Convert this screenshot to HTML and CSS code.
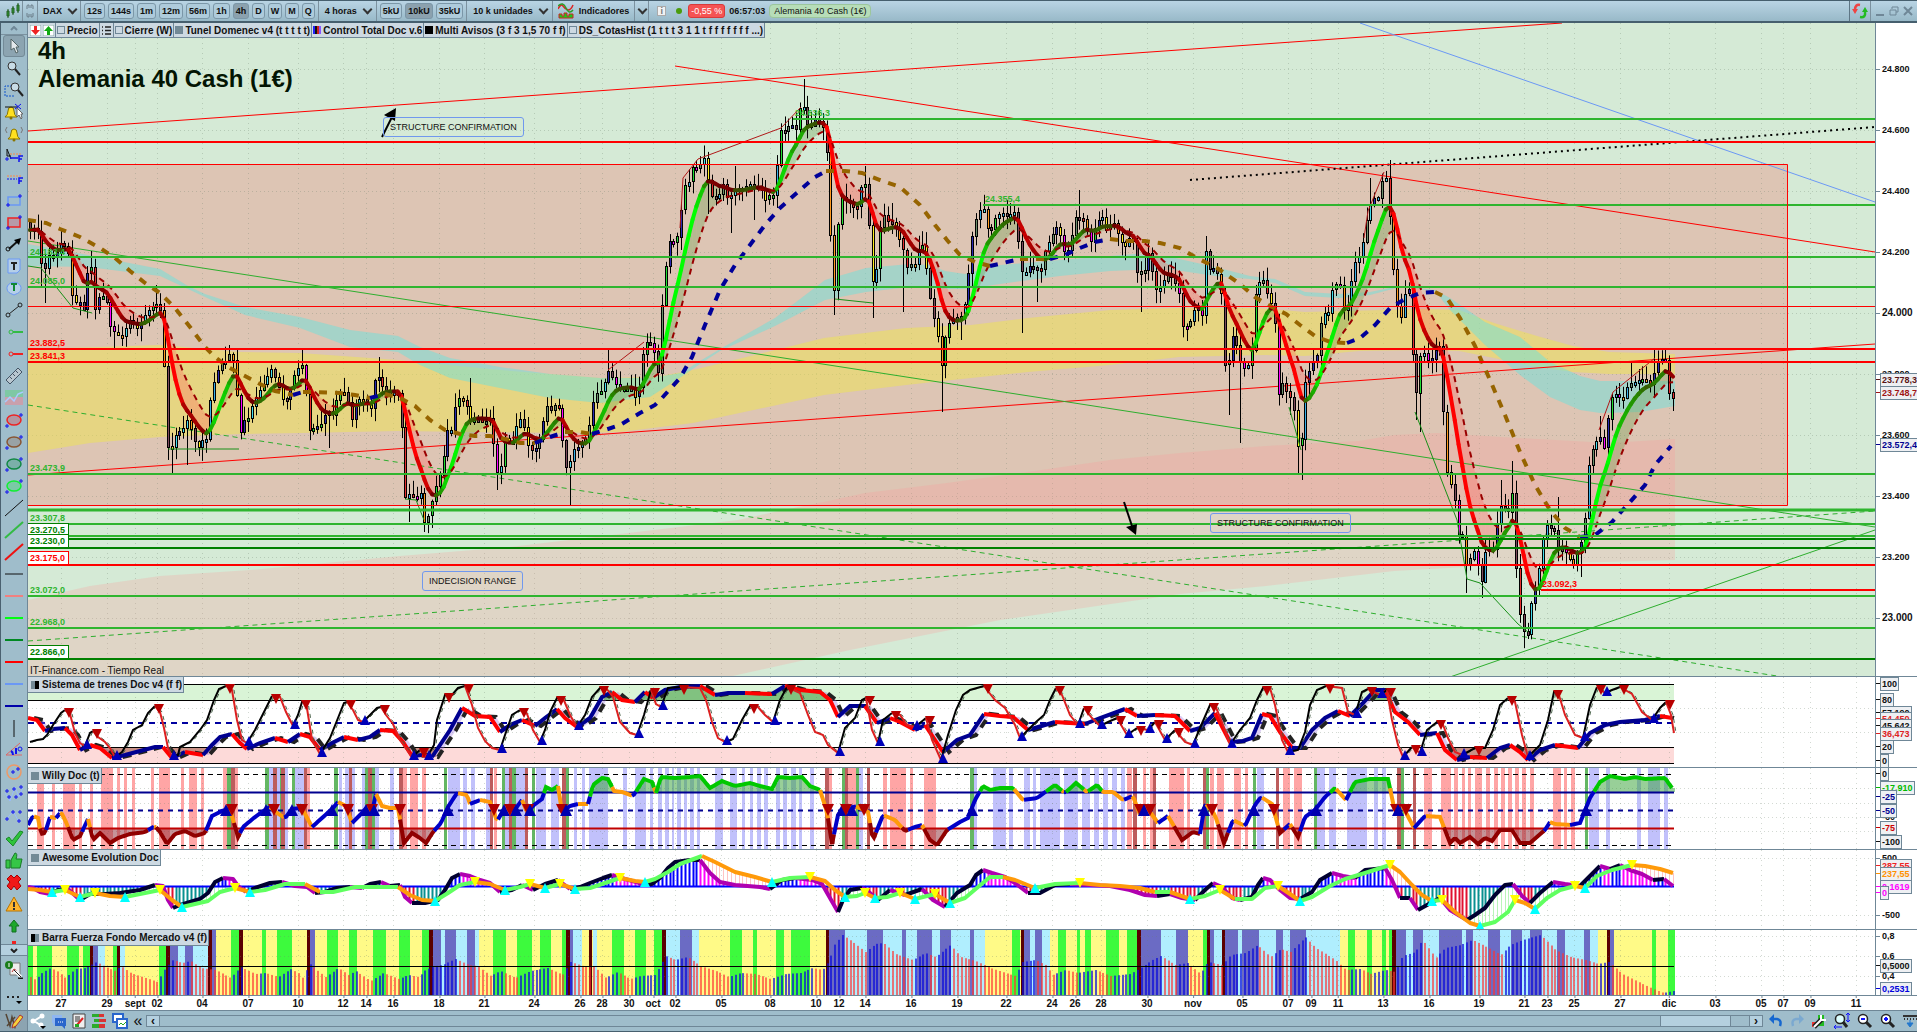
FILE: index.html
```html
<!DOCTYPE html>
<html lang="es">

<head>
    <meta charset="UTF-8">
    <meta name="viewport" content="width=device-width, initial-scale=1.0">
    <title>Alemania 40 Cash (1€)</title>
    <link rel="stylesheet" href="styles.css">
</head>

<body>
    <header class="toolbar">
        <div class="group">
            <svg class="icon" width="16" height="16" viewBox="0 0 16 16"><path d="M3 6v9M8 3v9M13 0v10" stroke="#245c24"/><path d="M2 8h2v5H2zM7 5h2v5H7zM12 2h2v6h-2z" fill="#2f9c2f" stroke="#245c24"/></svg>
        </div>
        <div class="group link">
            <svg class="icon" width="8" height="14" viewBox="0 0 8 14"><path d="M1 5V2q0-1 1-1h1v3M5 4V1h1q1 0 1 1v3M1 9v3q0 1 1 1h1v-3M5 10v3h1q1 0 1-1V9" fill="none" stroke="#6b7d88"/></svg>
        </div>
        <button class="drop symbol">DAX</button>
        <div class="group frames">
            <button>12s</button><button>144s</button><button>1m</button><button>12m</button><button>56m</button><button>1h</button><button class="on">4h</button><button>D</button><button>W</button><button>M</button><button>Q</button>
        </div>
        <button class="drop">4 horas</button>
        <div class="group frames units">
            <button>5kU</button><button class="on">10kU</button><button>35kU</button>
        </div>
        <button class="drop">10 k unidades</button>
        <button class="indicators">
            <svg width="16" height="16" viewBox="0 0 16 16"><path d="M0 6q3-6 5-3t5 4q3 0 5-5" fill="none" stroke="#d22" stroke-width="1.5"/><path d="M0 3q5-5 8 2t7 2" fill="none" stroke="#2a9d2a" stroke-width="1.5"/><path d="M1 15v-4h3v2h2v-3h3v3h2v-2h4v4z" fill="#1cc81c" stroke="#c22"/></svg>
            Indicadores
        </button>
        <button class="drop bare" aria-label="Más"></button>
        <div class="status">
            <span class="info">i</span>
            <span class="dot"></span>
            <span class="change">-0,55 %</span>
            <time>06:57:03</time>
            <span class="name">Alemania 40 Cash (1€)</span>
        </div>
        <div class="group swap">
            <svg width="16" height="16" viewBox="0 0 16 16"><path d="M8 2Q3 1 3 7" fill="none" stroke="#e44" stroke-width="2.5"/><path d="M0 6h6l-3 5z" fill="#e44"/><path d="M8 14q6 1 5-5" fill="none" stroke="#2b2" stroke-width="2.5"/><path d="M10 9h6l-3-5z" fill="#2b2"/></svg>
        </div>
        <div class="window-buttons">
            <button aria-label="Minimizar"><svg width="10" height="10" viewBox="0 0 10 10"><path d="M1 9h8" stroke="#6f8797" stroke-width="2"/></svg></button>
            <button aria-label="Restaurar"><svg width="10" height="10" viewBox="0 0 10 10"><path d="M3 3V1h6v5H7M1 4h6v5H1z" fill="none" stroke="#6f8797"/></svg></button>
            <button aria-label="Cerrar"><svg width="10" height="10" viewBox="0 0 10 10"><path d="M1 1l8 8M9 1L1 9" stroke="#6f8797" stroke-width="2"/></svg></button>
        </div>
    </header>

    <div class="workspace">
        <aside class="sidebar">
            <button class="scroll-up" aria-label="Subir"><svg width="8" height="5" viewBox="0 0 8 5"><path d="M1 4l3-3 3 3" fill="none" stroke="#6f8797" stroke-width="2"/></svg></button>
            <div class="tools" id="tools"></div>
            <button class="scroll-down" aria-label="Bajar"><svg width="8" height="5" viewBox="0 0 8 5"><path d="M1 1l3 3 3-3" fill="none" stroke="#222" stroke-width="2"/></svg></button>
            <div class="tools extra" id="extraTools"></div>
        </aside>

        <main class="charts">
            <section class="panel" id="price">
                <div class="plot">
                    <div class="legend">
                        <span class="arrows">
                            <svg width="11" height="11" viewBox="0 0 11 11"><path d="M0 0h11v11H0z" fill="#fff" stroke="#8aa"/><path d="M4 1h3v4h3l-4.5 5L1 5h3z" fill="#e22"/></svg>
                            <svg width="11" height="11" viewBox="0 0 11 11"><path d="M0 0h11v11H0z" fill="#fff" stroke="#8aa"/><path d="M4 10h3V6h3L5.5 1 1 6h3z" fill="#1a1"/></svg>
                        </span>
                        <span><i></i>Precio</span>
                        <span class="list"><svg width="9" height="9" viewBox="0 0 9 9"><path d="M0 1h1M3 1h6M0 4.5h1M3 4.5h6M0 8h1M3 8h6" stroke="#222" stroke-width="1.5"/></svg></span>
                        <span><i></i>Cierre (W)</span>
                        <span><i class="gray"></i>Tunel Domenec v4 (t t t t t)</span>
                        <span><i class="bars"></i>Control Total Doc v.6</span>
                        <span><i class="black"></i>Multi Avisos (3 f 3 1,5 70 f f)</span>
                        <span><i></i>DS_CotasHist (1 t t t 3 1 1 t f f f f f f f ...)</span>
                    </div>
                    <h1>4h<br>Alemania 40 Cash (1€)</h1>
                    <p class="source">IT-Finance.com - Tiempo Real</p>
                </div>
                <div class="axis"></div>
            </section>
            <section class="panel" id="trains">
                <div class="plot"><h2><i class="half"></i>Sistema de trenes Doc v4 (f f)</h2></div>
                <div class="axis"></div>
            </section>
            <section class="panel" id="willy">
                <div class="plot"><h2><i></i>Willy Doc (t)</h2></div>
                <div class="axis"></div>
            </section>
            <section class="panel" id="awesome">
                <div class="plot"><h2><i></i>Awesome Evolution Doc</h2></div>
                <div class="axis"></div>
            </section>
            <section class="panel" id="strength">
                <div class="plot"><h2><i class="half flip"></i>Barra Fuerza Fondo Mercado v4 (f)</h2></div>
                <div class="axis"></div>
            </section>
            <div class="dates" id="dates"></div>
        </main>
    </div>

    <footer class="bottombar">
        <button class="pencil" aria-label="Dibujo"><svg width="18" height="16" viewBox="0 0 18 16"><path d="M1 1l4 12 2-9 3 10 2-6M2 13L10 4" fill="none" stroke="#543" stroke-width="1.5"/><path d="M7 15l1-4 7-9 3 2-7 9z" fill="#f6d23a" stroke="#a33"/></svg></button>
        <div class="footer-icons">
            <button aria-label="Compartir"><svg width="16" height="16" viewBox="0 0 16 16"><path d="M12 3L4 8l8 5" fill="none" stroke="#fff" stroke-width="2"/><circle cx="3" cy="8" r="2.5" fill="#fff"/><circle cx="12" cy="3" r="2.5" fill="#fff"/><circle cx="11" cy="12" r="2.5" fill="#fff"/><path d="M10 13h6l-3 3z"/></svg></button>
            <button aria-label="Chat"><svg width="16" height="16" viewBox="0 0 16 16"><path d="M1 2h10v8H5l-3 3V10H1z" fill="#8fb6f0"/><path d="M4 5h11v8h-1v3l-3-3H4z" fill="#2a66cc"/><path d="M7 9h1M9 9h1M11 9h1" stroke="#fff"/></svg></button>
            <button aria-label="Informe"><svg width="14" height="16" viewBox="0 0 14 16"><path d="M1 1h12v14H1z" fill="#eee" stroke="#444"/><path d="M3 4h5M3 6h5M3 8h5" stroke="#333"/><path d="M5 12l6-7" stroke="#d22" stroke-width="2"/><path d="M3 11h4v3H3z" fill="#2a2"/></svg></button>
            <button aria-label="Libro"><svg width="16" height="16" viewBox="0 0 16 16"><path d="M1 1h7v3H1zM3 6h5v3H3zM1 11h7v4H1z" fill="#2cab2c"/><path d="M8 1h5v3H8zM8 6h7v3H8zM8 11h6v4H8z" fill="#d83434"/></svg></button>
            <button aria-label="Ventanas"><svg width="16" height="16" viewBox="0 0 16 16"><path d="M1 1h10v8H1z" fill="#fff" stroke="#2a66cc" stroke-width="2"/><path d="M5 6h10v9H5z" fill="#fff" stroke="#2a66cc" stroke-width="2"/><path d="M7 12l2-2 2 2 3-3" fill="none" stroke="#2a2"/></svg></button>
            <button class="collapse">«</button>
        </div>
        <div class="scrollbar">
            <button aria-label="Izquierda">‹</button>
            <div class="track"><div class="thumb"></div></div>
            <button aria-label="Derecha">›</button>
        </div>
        <div class="footer-tools">
            <button aria-label="Deshacer"><svg width="14" height="14" viewBox="0 0 14 14"><path d="M3 5h5q5 1 3 7" fill="none" stroke="#1667cf" stroke-width="2.5"/><path d="M0 5l5-5v10z" fill="#1667cf"/></svg></button>
            <button aria-label="Rehacer"><svg width="14" height="14" viewBox="0 0 14 14"><path d="M11 5H6q-5 1-3 7" fill="none" stroke="#7ba9d0" stroke-width="2.5"/><path d="M14 5L9 0v10z" fill="#7ba9d0"/></svg></button>
            <button aria-label="Ajustes"><svg width="16" height="16" viewBox="0 0 16 16"><path d="M1 9h4v5H1z" fill="#e33"/><path d="M7 2h6v11H7z" fill="#2b2"/><path d="M3 14l8-8" stroke="#222" stroke-width="5"/><path d="M3 14l8-8M10 2v5h5" fill="none" stroke="#fff" stroke-width="2"/></svg></button>
            <button aria-label="Ajustar zoom"><svg width="16" height="16" viewBox="0 0 16 16"><circle cx="6" cy="6" r="4.5" fill="#dff" stroke="#222" stroke-width="1.5"/><path d="M9 9l4 5" stroke="#222" stroke-width="3"/><path d="M14 0v9M12 2l2-2 2 2M12 7l2 2 2-2M0 14h8M2 12l-2 2 2 2" fill="none" stroke="#11f"/></svg></button>
            <button aria-label="Alejar"><svg width="16" height="16" viewBox="0 0 16 16"><circle cx="6" cy="6" r="4.5" fill="#fff" stroke="#222" stroke-width="1.5"/><path d="M9 9l5 5" stroke="#222" stroke-width="3"/><path d="M4 6h4" stroke="#11f" stroke-width="2"/></svg></button>
            <button aria-label="Acercar"><svg width="16" height="16" viewBox="0 0 16 16"><circle cx="6" cy="6" r="4.5" fill="#fff" stroke="#222" stroke-width="1.5"/><path d="M9 9l5 5" stroke="#222" stroke-width="3"/><path d="M4 6h4M6 4v4" stroke="#11f" stroke-width="2"/></svg></button>
            <button aria-label="Escala"><svg width="14" height="14" viewBox="0 0 14 14"><path d="M0 2h14M1 5h1M4 5h1M7 5h1M10 5h1M13 5h1" stroke="#333" stroke-width="2"/><path d="M7 6v4M4 9h6l-3 4z" stroke="#27c" fill="#27c"/></svg></button>
        </div>
    </footer>

    <script src="chart.js"></script>
</body>

</html>
```
FILE: styles.css
```css
* {
    box-sizing: border-box;
}

body {
    margin: 0;
    height: 100vh;
    display: flex;
    flex-direction: column;
    overflow: hidden;
    background-color: #9fbdcb;
    color: #111;
    font-family: "Liberation Sans", Arial, sans-serif;
    font-size: 10px;
    font-weight: bold;
}

button {
    font: inherit;
    color: inherit;
    background: none;
    border: none;
    margin: 0;
    padding: 0;
    display: flex;
    align-items: center;
    justify-content: center;
    cursor: pointer;
}

svg {
    display: block;
    flex: none;
}

/* top toolbar */
.toolbar {
    flex: none;
    height: 23px;
    display: flex;
    align-items: stretch;
    border-top: 1px solid #465f6e;
    border-bottom: 2px solid #465f6e;
    background: linear-gradient(#b9d4e4, #98b9c8);
    font-size: 9px;
    white-space: nowrap;
}

.group,
.drop,
.indicators {
    display: flex;
    align-items: center;
    border-right: 1px solid #7b919f;
    padding: 0 4px;
}

.group:first-child {
    padding: 0 1px 0 5px;
}

.group.link {
    padding: 0 3px;
}

.drop {
    padding: 0 4px 0 6px;
}

.drop.symbol {
    padding: 0 3px 0 5px;
}

.drop::after {
    content: "";
    width: 5px;
    height: 5px;
    margin: 0 1px 3px 7px;
    border-right: 2px solid #333;
    border-bottom: 2px solid #333;
    transform: rotate(45deg);
}

.drop.bare {
    width: 14px;
}

.drop.bare::after {
    flex: none;
    margin-left: 0;
}

.frames {
    gap: 3px;
    padding: 0 3px;
}

.frames button {
    height: 16px;
    padding: 0 2px;
    border: 1px solid #7b97a8;
    border-radius: 3px;
    background-color: #aecbdb;
}

.frames .on {
    background-color: #8ba1ae;
}

.indicators {
    gap: 5px;
    padding: 0 5px;
}

.status {
    flex: 1;
    display: flex;
    align-items: center;
    gap: 4px;
    padding-left: 8px;
}

.info {
    width: 9px;
    height: 10px;
    line-height: 8px;
    text-align: center;
    color: #777;
    background-color: #f2f2f2;
    border: 1px solid #aaa;
}

.dot {
    width: 6px;
    height: 6px;
    margin: 0 2px 0 6px;
    border-radius: 3px;
    background-color: #4a9c0c;
}

.change {
    padding: 0 2px;
    line-height: 12px;
    border: 1px solid #d83a3a;
    border-radius: 3px;
    background-color: #f55353;
    color: #fff;
    font-weight: normal;
}

.name {
    padding: 0 4px;
    line-height: 12px;
    border: 1px solid #9cc69c;
    border-radius: 4px;
    background-color: #b7ddb8;
    font-weight: normal;
}

.swap {
    border-left: 1px solid #5e7685;
    padding: 0 2px;
}

.window-buttons {
    display: flex;
    gap: 4px;
    padding: 0 4px;
}

/* drawing tools */
.workspace {
    flex: 1;
    min-height: 0;
    display: flex;
}

.sidebar {
    flex: none;
    width: 28px;
    display: flex;
    flex-direction: column;
    border-left: 1px solid #4a6170;
    border-right: 1px solid #6f8797;
    background-color: #9fbdcb;
}

.scroll-up {
    flex: none;
    height: 12px;
    border-bottom: 1px solid #7b919f;
}

.scroll-down {
    flex: none;
    height: 12px;
    border-top: 1px solid #6f8797;
    border-bottom: 1px solid #6f8797;
    background-color: #b4d0df;
}

.tools {
    flex: 1;
    min-height: 0;
    overflow: hidden;
}

.tools.extra {
    flex: none;
}

.tools button {
    width: 22px;
    height: 22px;
    margin-left: 2px;
    border: 1px solid transparent;
    border-radius: 3px;
}

.tools .on {
    background-color: #8ca4b1;
    border-color: #738a97;
}

.tools.extra button {
    height: 27px;
}

/* chart panels */
.charts {
    flex: 1;
    min-width: 0;
    display: grid;
    grid-template-rows: 654fr 91fr 82fr 80fr 66fr 14px;
    background-color: #fff;
}

.panel {
    min-height: 0;
    display: flex;
    border-bottom: 1px solid #6f8797;
}

.plot {
    position: relative;
    flex: 1;
    min-width: 0;
    overflow: hidden;
}

.plot > svg {
    width: 100%;
    height: 100%;
}

#price .plot {
    background-color: #d5ead6;
}

.axis {
    position: relative;
    flex: none;
    width: 42px;
    border-left: 1px solid #6f8797;
    overflow: hidden;
}

.axis span {
    position: absolute;
    left: 6px;
    margin-top: -5px;
    line-height: 10px;
    font-size: 9px;
}

.axis span::before {
    content: "";
    position: absolute;
    left: -6px;
    top: 5px;
    width: 4px;
    border-top: 1px solid #6f8797;
}

.axis .major {
    font-size: 10px;
}

.axis .tag {
    left: 4px;
    margin-top: -7px;
    padding: 1px;
    border: 1px solid #6f8797;
    background-color: #eef0f3;
}

.axis .tag::before {
    left: -5px;
    border-color: currentColor;
}

.legend {
    position: absolute;
    left: 0;
    top: 0;
    height: 15px;
    display: flex;
    background-color: #cdd9e2;
    border-bottom: 1px solid #6f8797;
    white-space: nowrap;
    line-height: 13px;
}

.legend span {
    display: flex;
    align-items: center;
    gap: 2px;
    padding: 0 1px;
    border-right: 1px solid #6f8797;
}

.legend .arrows {
    padding: 0 1px 0 2px;
}

.legend .list {
    padding: 0 2px;
}

.legend i,
h2 i {
    width: 8px;
    height: 8px;
    background-color: #738a96;
}

.legend i {
    background: none;
    border: 1px solid #6f8797;
}

.legend .gray {
    background-color: #738a96;
}

.legend .black {
    background-color: #000;
    border-color: #000;
}

.legend .bars {
    border: none;
    background: linear-gradient(90deg, #22f 25%, #111 25%, #111 50%, #c22 50%, #c22 75%, #85f 75%);
}

h1 {
    position: absolute;
    left: 10px;
    top: 14px;
    margin: 0;
    font-size: 24px;
    line-height: 28px;
    color: #031503;
}

h2 {
    position: absolute;
    left: 0;
    top: 0;
    margin: 0;
    padding: 0 1px 0 3px;
    display: flex;
    align-items: center;
    gap: 3px;
    font-size: 10px;
    line-height: 15px;
    border: solid #6f8797;
    border-width: 0 1px 1px 0;
    background-color: #cdd9e2;
}

h2 .half {
    background: linear-gradient(90deg, #738a96 50%, #000 50%);
}

h2 .flip {
    background: linear-gradient(90deg, #000 50%, #738a96 50%);
}

.source {
    position: absolute;
    left: 2px;
    bottom: 0;
    margin: 0;
    line-height: 11px;
    font-weight: normal;
}

.level {
    position: absolute;
    left: 2px;
    margin-top: -5px;
    line-height: 10px;
    font-size: 9px;
}

.level.boxed {
    left: 0;
    margin-top: -7px;
    padding: 1px 3px 1px 2px;
    border: 1px solid;
    border-left: none;
    background-color: #fff;
}

.note {
    position: absolute;
    padding: 0 6px;
    line-height: 18px;
    font-size: 9px;
    border: 1px solid #7098ee;
    border-radius: 3px;
    font-weight: normal;
    white-space: nowrap;
}

.dates {
    position: relative;
    margin-right: 42px;
}

.dates span {
    position: absolute;
    top: 2px;
    transform: translateX(-50%);
    line-height: 12px;
}

.dates span::before {
    content: "";
    position: absolute;
    left: 50%;
    top: -2px;
    height: 2px;
    border-left: 1px solid #6f8797;
}

/* bottom bar */
.bottombar {
    flex: none;
    height: 22px;
    display: flex;
    align-items: center;
    border-top: 1px solid #6f8797;
    border-bottom: 1px solid #465f6e;
    background-color: #9fbdcb;
}

.pencil {
    width: 28px;
    height: 20px;
    border-right: 1px solid #6f8797;
    background-color: #8ca4b1;
}

.footer-icons {
    display: flex;
    align-items: center;
    gap: 5px;
    padding-left: 2px;
}

.collapse {
    width: 10px;
    font-size: 16px;
    font-weight: normal;
    line-height: 14px;
}

.scrollbar {
    flex: 1;
    display: flex;
    height: 12px;
    margin-left: 3px;
    border: 1px solid #6f8797;
}

.scrollbar button {
    width: 12px;
    font-size: 12px;
    line-height: 8px;
    background-color: #b4d0df;
}

.track {
    flex: 1;
    display: flex;
    justify-content: flex-end;
    border: solid #6f8797;
    border-width: 0 1px;
}

.thumb {
    width: 71px;
    margin-right: 18px;
    border: solid #6f8797;
    border-width: 0 1px;
    background-color: #b4d0df;
}

.footer-tools {
    display: flex;
    align-items: center;
    gap: 7px;
    padding-left: 6px;
}
```
FILE: chart.js
```js
const LEFT = 28;
const RIGHT = 1875;
const LAST = 1674;
const STEP = 3.83;

const parse = text => text.trim().split(/\s+/).map(pair => pair.split(',').map(Number));

function valueAt(points, x) {
    if (x <= points[0][0]) return points[0][1];
    for (let i = 1; i < points.length; i++) {
        if (x <= points[i][0]) {
            const [x0, y0] = points[i - 1];
            const [x1, y1] = points[i];
            return y0 + (y1 - y0) * (x - x0) / (x1 - x0);
        }
    }
    return points[points.length - 1][1];
}

// small repeatable random generator, so the wicks do not jump on reload
let seed = 20;
function random() {
    seed = (seed * 16807) % 2147483647;
    return seed / 2147483647;
}

const xs = [];
for (let x = 30; x <= LAST + 1; x += STEP) xs.push(x);

const line = (x1, y1, x2, y2, color, width = 1, extra = '') =>
    `<line x1="${x1}" y1="${y1}" x2="${x2}" y2="${y2}" stroke="${color}" stroke-width="${width}" ${extra}/>`;
const rect = (x, y, w, h, fill) => `<rect x="${x}" y="${y}" width="${w}" height="${h}" fill="${fill}"/>`;
const poly = (points, color, width, extra = '') =>
    `<polyline points="${points.map(p => p.join()).join(' ')}" fill="none" stroke="${color}" stroke-width="${width}" ${extra}/>`;
const up = (x, y, color, s = 5) => `<path d="M${x - s} ${y + s}h${2 * s}l${-s} ${-2 * s}z" fill="${color}"/>`;
const down = (x, y, color, s = 5) => `<path d="M${x - s} ${y - s}h${2 * s}l${-s} ${2 * s}z" fill="${color}"/>`;

// splits a line in pieces of one colour, the colour depends on the slope
function sloped(points, colorOf, width, extra = '') {
    let out = '';
    let part = [points[0]];
    let current = null;
    for (let i = 1; i < points.length; i++) {
        const color = colorOf(points[i][1] - points[i - 1][1], points[i][1]);
        if (current && color !== current) {
            out += poly(part, current, width, extra);
            part = [points[i - 1]];
        }
        current = color;
        part.push(points[i]);
    }
    return out + poly(part, current, width, extra);
}

const dateLabels = [
    [61, '27'], [107, '29'], [135, 'sept'], [157, '02'], [202, '04'], [248, '07'], [298, '10'], [343, '12'], [366, '14'], [393, '16'],
    [439, '18'], [484, '21'], [534, '24'], [580, '26'], [602, '28'], [629, '30'], [653, 'oct'], [675, '02'], [721, '05'], [770, '08'],
    [816, '10'], [839, '12'], [865, '14'], [911, '16'], [957, '19'], [1006, '22'], [1052, '24'], [1075, '26'], [1101, '28'], [1147, '30'],
    [1193, 'nov'], [1242, '05'], [1288, '07'], [1311, '09'], [1338, '11'], [1383, '13'], [1429, '16'], [1479, '19'], [1524, '21'],
    [1547, '23'], [1574, '25'], [1620, '27'], [1669, 'dic'], [1715, '03'], [1761, '05'], [1783, '07'], [1810, '09'], [1856, '11']
];

function grid(top, bottom, rows) {
    let out = '';
    dateLabels.forEach(([x]) => out += line(x + 0.5, top, x + 0.5, bottom, 'rgba(110,130,110,.3)', 1, 'stroke-dasharray="1 4"'));
    rows.forEach(y => out += line(LEFT, y + 0.5, RIGHT, y + 0.5, 'rgba(110,130,110,.3)', 1, 'stroke-dasharray="1 3"'));
    return out;
}

function mount(id, top, height, content, marks) {
    const panel = document.getElementById(id);
    panel.querySelector('.plot').insertAdjacentHTML('afterbegin',
        `<svg viewBox="${LEFT} ${top} ${RIGHT - LEFT} ${height}" preserveAspectRatio="none">${content}</svg>`);
    const axis = panel.querySelector('.axis');
    marks.forEach(([y, text, cls = '', color = '#111']) => {
        axis.insertAdjacentHTML('beforeend',
            `<span class="${cls}" style="top:${(y - top) / height * 100}%;color:${color}">${text}</span>`);
    });
}

/* ---- price ---- */
const price = parse(`
30,230 37,226 40,247 42,268 46,268 49,255 55,257 61,242 65,247 69,255 71,278 73,308 78,298 84,310 88,267 92,267 94,313 98,297 102,295 107,303
111,330 115,332 121,337 124,331 131,317 135,328 139,327 143,317 151,307 158,303 161,312 163,320 165,407 168,448 173,447 176,433 182,430 188,418
194,440 198,448 202,440 206,440 208,430 211,385 214,382 220,363 224,363 229,354 233,360 236,375 239,448 242,418 247,422 253,403 258,393 265,382
271,368 278,383 282,398 288,399 292,382 296,370 302,365 305,385 309,430 314,428 322,423 327,410 333,415 338,393 343,390 347,398 352,420 356,403
361,397 367,403 371,408 375,378 380,377 384,393 394,392 398,393 402,432 405,498 410,493 416,500 421,493 424,523 428,517 432,502 437,482 442,468
447,430 452,430 456,400 461,397 467,407 469,422 476,418 484,422 490,418 494,448 497,472 501,467 504,437 512,443 516,427 522,415 527,443 531,450
537,448 541,433 546,405 551,410 557,402 561,418 564,467 569,467 572,450 578,447 584,440 588,433 592,405 596,393 602,390 608,370 614,380 618,388
633,388 636,400 640,383 644,342 653,343 658,375 661,313 664,287 668,240 675,243 680,228 683,178 687,193 691,167 698,168 704,158 708,180 712,197
718,198 723,183 728,200 736,187 742,190 749,183 755,187 761,188 765,200 771,193 775,197 778,145 781,128 787,133 790,118 795,135 800,107 804,107
809,132 814,118 820,122 824,130 828,163 831,250 835,298 838,225 842,197 851,205 857,208 862,183 866,185 870,243 874,302 878,247 882,212 889,223
893,222 898,235 903,247 905,270 910,263 914,268 918,250 924,243 927,277 931,305 935,323 940,347 943,382 946,325 950,323 955,317 963,315 967,287
972,237 977,215 983,205 987,227 991,230 996,215 1002,212 1008,217 1014,210 1019,248 1023,280 1028,265 1034,267 1041,270 1044,253 1053,233
1059,223 1062,252 1069,250 1075,217 1085,220 1090,245 1096,223 1102,215 1106,230 1114,223 1120,240 1126,247 1132,230 1136,272 1145,270 1149,250
1155,290 1161,287 1167,272 1173,278 1179,293 1183,327 1189,325 1194,310 1198,307 1203,318 1206,247 1209,270 1216,267 1222,297 1224,363 1228,370
1231,333 1236,343 1242,370 1251,363 1255,297 1258,282 1264,280 1269,301 1274,306 1278,395 1284,378 1289,407 1292,380 1296,443 1301,451 1304,384
1308,378 1311,360 1316,363 1319,336 1323,306 1327,323 1331,292 1335,284 1342,286 1345,324 1349,297 1354,264 1359,257 1364,238 1368,211 1373,198
1378,198 1384,172 1388,186 1391,242 1395,286 1400,329 1403,296 1409,289 1411,314 1415,412 1419,358 1423,351 1430,363 1435,350 1440,346 1442,390
1445,441 1449,500 1452,475 1457,520 1460,547 1464,527 1467,578 1472,546 1476,556 1482,583 1486,546 1494,549 1499,505 1503,507 1509,512 1513,488
1517,593 1522,629 1528,635 1533,588 1537,590 1541,546 1546,524 1555,531 1559,553 1564,546 1567,556 1575,566 1579,544 1584,539 1587,475 1590,458
1594,444 1601,436 1605,451 1609,407 1613,392 1623,399 1628,384 1635,382 1644,378 1651,385 1655,368 1659,358 1666,360 1669,392 1674,400`);

const spikes = parse(`
41,288 46,303 92,251 115,350 121,346 158,285 173,473 188,465 229,345 302,350 328,448 380,357 409,522 426,532 469,378 497,490 569,505 608,350
709,214 732,233 736,166 755,220 804,79 835,315 866,166 873,318 893,203 903,312 941,412 961,340 1021,333 1037,302 1080,190 1140,312 1185,341
1205,236 1228,415 1242,443 1289,415 1296,473 1301,480 1372,178 1388,160 1415,420 1419,432 1467,593 1482,598 1502,480 1513,461 1522,648
1528,639 1559,497 1582,577 1601,416 1631,363 1655,350 1674,411`);

const closes = xs.map(x => valueAt(price, x));

function ema(values, period) {
    let last = values[0];
    return values.map(v => last += (v - last) * 2 / (period + 1));
}

const fast = ema(ema(closes, 5), 4);
const slow = ema(ema(closes, 9), 6);

const tops = {
    yellow: '28,349 100,347 160,345 240,352 300,353 398,360 500,370 600,378 655,377 693,370 824,338 906,328 971,325 1028,318 1110,310 1179,308 1257,308 1305,312 1423,309 1459,310 1494,323 1537,336 1573,346 1609,352 1675,354',
    cyan: '28,244 88,255 160,269 188,286 205,294 245,307 300,317 350,330 398,336 420,347 450,358 500,367 550,374 600,378 650,378 681,373 700,361 720,349 775,318 825,280 866,268 910,264 930,265 945,271 965,274 1000,265 1060,260 1110,256 1135,254 1175,258 1215,267 1250,276 1275,279 1305,292 1340,294 1370,292 1400,286 1435,290 1450,298 1485,322 1520,337 1550,362 1580,376 1600,381 1675,381',
    pink: '28,600 90,586 160,576 250,570 400,556 510,547 620,534 738,520 783,510 824,502 865,493 947,483 1028,472 1110,460 1180,453 1266,446 1359,441 1394,435 1437,433 1501,437 1573,441 1609,443 1675,439'
};
const bottoms = {
    yellow: '28,453 90,443 160,437 240,434 300,433 398,431 560,433 620,432 693,423 824,395 906,385 971,378 1028,372 1110,365 1179,357 1266,355 1305,356 1359,351 1423,350 1459,351 1494,358 1537,367 1573,372 1609,374 1675,374',
    cyan: '28,266 88,267 160,276 188,289 205,297 245,315 300,328 350,347 398,352 420,365 450,378 500,388 550,398 600,403 650,397 681,377 700,364 720,351 775,326 825,300 866,292 910,287 945,289 965,289 1000,284 1060,276 1110,271 1135,270 1175,270 1215,276 1250,279 1275,283 1305,296 1340,298 1370,295 1400,287 1435,291 1450,310 1485,345 1520,375 1550,397 1580,410 1600,413 1640,412 1675,406',
    pink: '28,677 728,677 850,650 1000,620 1180,594 1266,586 1394,571 1501,565 1675,560'
};
const fills = { yellow: 'rgba(240,230,80,.5)', cyan: 'rgba(110,225,220,.5)', pink: 'rgba(255,150,150,.25)' };

function drawPrice() {
    let out = rect(28, 164, 1760, 341, '#ddc5b4');
    out += grid(23, 676, [69, 130, 191, 252, 313, 374, 435, 496, 557, 618]);
    ['yellow', 'cyan', 'pink'].forEach(name => {
        const points = parse(tops[name]).concat(parse(bottoms[name]).reverse());
        out += `<polygon points="${points.join(' ')}" fill="${fills[name]}"/>`;
    });

    // ribbon between the averages
    for (let i = 1; i < xs.length; i++) {
        out += `<polygon points="${xs[i - 1]},${fast[i - 1]} ${xs[i]},${fast[i]} ${xs[i]},${slow[i]} ${xs[i - 1]},${slow[i - 1]}" fill="${fast[i] > slow[i] ? 'rgba(255,110,100,.35)' : 'rgba(110,160,80,.35)'}"/>`;
    }

    // trend lines
    out += line(28, 131, 1562, 23, 'red') + line(675, 66, 1875, 252, 'red') + line(28, 475, 1875, 344, 'red');
    out += line(28, 241, 1875, 527, '#2eae2e') + line(1450, 677, 1875, 530, '#2eae2e');
    out += line(28, 405, 1777, 676, '#2eae2e', 1, 'stroke-dasharray="5 4"');
    out += line(28, 641, 1875, 511, '#2eae2e', 1, 'stroke-dasharray="5 4"');
    out += line(1360, 23, 1875, 202, '#6b98f5');
    out += line(1190, 180, 1875, 127, '#000', 2, 'stroke-dasharray="2 4"');

    // candles
    const colors = {
        fall: ['#7d4a5c', '#7d4a5c', '#e83030', '#ff9a1f', '#ffee22', '#f0f'],
        rise: ['#44ddee', '#22dd33', '#6b8f6b', '#2a2ab0', '#38b0e8']
    };
    xs.forEach((x, i) => {
        const close = closes[i];
        const open = i ? closes[i - 1] : close - 8;
        let high = Math.min(open, close) - 1 - random() * 13;
        let low = Math.max(open, close) + 1 + random() * 13;
        spikes.forEach(([sx, sy]) => {
            if (Math.abs(sx - x) <= STEP / 2) {
                if (sy < close) high = Math.min(high, sy);
                else low = Math.max(low, sy);
            }
        });
        const cx = Math.round(x) + 0.5;
        const set = close > open ? colors.fall : colors.rise;
        const fill = set[Math.floor(random() * set.length)];
        const top = Math.round(Math.min(open, close)) + 0.5;
        const size = Math.max(3, Math.round(Math.abs(open - close)));
        out += line(cx, high, cx, low, '#000');
        out += `<rect x="${cx - 1}" y="${top}" width="2" height="${size}" fill="${fill}" stroke="#000"/>`;
    });

    // averages
    xs.forEach((x, i) => {
        if (!i) return;
        const s = fast[i] - fast[i - 1];
        const t = Math.min(1, Math.abs(s) / 13);
        const color = s > 0 ? `rgb(${Math.round(100 + 155 * t)},0,0)` : `rgb(${Math.round(60 - 60 * t)},${Math.round(70 + 185 * t)},0)`;
        out += line(xs[i - 1], fast[i - 1], x, fast[i], color, 4, 'stroke-linecap="round"');
    });
    out += poly(xs.map((x, i) => [x, slow[i]]), '#990000', 2, 'stroke-dasharray="6 5"');
    const trend = parse(`28,220 46,223 60,229 80,237 100,248 115,258 130,271 145,283 160,293 175,308 190,327 205,347 215,357 228,367 245,376 260,384
    275,391 293,395 303,392 315,392 340,393 355,395 370,398 385,394 400,398 415,406 430,420 445,430 460,434 475,436 490,436 505,439 520,443 535,443
    550,437 565,432 580,432 592,434 605,430 620,425 640,413 655,405 662,398 680,378 692,357 705,325 720,290 735,265 750,245 765,225 780,208 800,190
    815,177 826,171 845,171 862,173 880,180 900,187 920,205 935,225 947,240 960,255 975,262 990,266 1003,263 1020,259 1050,259 1065,255 1080,248
    1095,242 1110,239 1125,241 1145,241 1160,243 1180,248 1195,257 1217,268 1240,284 1255,297 1270,306 1286,314 1300,325 1315,336 1330,342 1347,343
    1360,338 1375,325 1390,308 1405,299 1420,293 1435,292 1447,298 1460,318 1475,346 1490,380 1505,415 1520,452 1535,485 1550,510 1565,528 1580,537
    1595,535 1612,522 1630,502 1645,485 1655,465 1671,446`);
    out += sloped(trend, d => d < 0 ? '#000099' : '#966400', 4, 'stroke-dasharray="8 8"');

    // swing lines
    ['28,266 41,268 73,308 92,313', '168,449 239,449', '405,499 416,500 424,520', '835,299 873,303', '1289,407 1301,450',
        '1415,412 1457,520 1467,579 1480,583 1518,624 1528,632'].forEach(s => out += poly(parse(s), '#189018', 1));
    ['608,370 644,342', '680,228 683,178 698,159 781,128 801,107', '1364,238 1368,211 1384,172', '1599,430 1613,392 1655,358']
        .forEach(s => out += poly(parse(s), '#b01818', 1));

    // horizontal levels
    [[119, 793], [205, 983], [257, 28], [287, 28], [474, 28], [524, 28], [536, 28], [596, 28], [628, 28]]
        .forEach(([y, x]) => out += line(x, y, RIGHT, y, '#2fb52f', 2));
    out += line(28, 510, RIGHT, 510, '#2fb52f', 3);
    [539, 548, 659].forEach(y => out += line(28, y, RIGHT, y, '#008000', 2));
    [[142, 28], [349, 28], [362, 28], [565, 28], [590, 1541]].forEach(([y, x]) => out += line(x, y, RIGHT, y, 'red', 2));
    out += line(28, 306.5, RIGHT, 306.5, 'red');
    out += '<path d="M28 164.5H1787.5V505.5H28" fill="none" stroke="red"/>';

    // arrows
    out += line(382, 137, 392, 117, '#000', 2) + '<path d="M396 108l-12 7 11 6z"/>';
    out += line(1124, 502, 1132, 526, '#000', 2) + '<path d="M1136 535l-10-8 11-3z"/>';

    mount('price', 23, 653, out, [
        [69, '24.800'], [130, '24.600'], [191, '24.400'], [252, '24.200'], [313, '24.000', 'major'], [374, '23.800'],
        [435, '23.600'], [496, '23.400'], [557, '23.200'], [618, '23.000', 'major'],
        [380, '23.778,3', 'tag', '#5a1414'], [393, '23.748,7', 'tag', '#a01414'], [445, '23.572,4', 'tag', '#000090']
    ]);

    const plot = document.querySelector('#price .plot');
    const place = (x, y) => `left:${(x - LEFT) / (RIGHT - LEFT) * 100}%;top:${(y - 23) / 653 * 100}%`;
    [[30, 252, '24.183,4', '#2fb52f'], [30, 281, '24.085,0', '#2fb52f'], [30, 343, '23.882,5', 'red'], [30, 356, '23.841,3', 'red'],
        [30, 468, '23.473,9', '#2fb52f'], [30, 518, '23.307,8', '#2fb52f'], [30, 590, '23.072,0', '#2fb52f'], [30, 622, '22.968,0', '#2fb52f'],
        [795, 113, '24.636,3', '#2fb52f'], [985, 199, '24.355,4', '#2fb52f'], [1542, 584, '23.092,3', 'red']
    ].forEach(([x, y, text, color]) => plot.insertAdjacentHTML('beforeend', `<span class="level" style="${place(x, y)};color:${color}">${text}</span>`));
    [[530, '23.270,5', '#008000'], [541, '23.230,0', '#008000'], [558, '23.175,0', 'red'], [652, '22.866,0', '#008000']]
        .forEach(([y, text, color]) => plot.insertAdjacentHTML('beforeend', `<span class="level boxed" style="${place(28, y)};color:${color}">${text}</span>`));
    [[383, 117, 'STRUCTURE CONFIRMATION'], [1210, 513, 'STRUCTURE CONFIRMATION'], [422, 571, 'INDECISION RANGE']]
        .forEach(([x, y, text]) => plot.insertAdjacentHTML('beforeend', `<span class="note" style="${place(x, y)}">${text}</span>`));
}

/* ---- trains ---- */
function drawTrains() {
    const quick = parse(`30,742 37,740 43,739 47,735 53,725 61,713 65,710 70,714 75,733 80,743 85,746 90,733 93,731 98,737 105,742 110,748 115,757
    122,752 128,742 133,730 142,725 148,713 155,706 160,712 164,728 168,748 172,757 178,755 180,747 190,742 200,730 207,720 214,700 219,689 226,686
    232,690 237,720 242,740 247,743 255,730 265,710 272,696 280,697 286,712 293,726 298,715 302,702 306,702 312,740 320,754 330,738 338,718 344,703
    347,702 353,710 358,720 363,722 370,715 377,708 381,707 386,715 393,724 400,740 407,750 412,757 420,750 427,757 434,745 437,720 445,695 452,695
    458,688 465,686 472,705 478,728 485,741 492,748 500,750 505,735 512,715 520,710 527,714 533,730 540,742 545,730 550,712 557,698 563,698 570,715
    577,727 585,715 592,697 600,688 606,688 613,697 620,722 630,733 637,735 644,715 651,690 656,704 661,707 668,688 680,687 700,688 706,700 712,722
    718,738 725,742 733,739 742,720 750,706 757,706 765,715 773,722 780,700 787,687 800,693 808,715 815,732 823,735 828,745 838,753 845,728 855,718
    862,700 866,698 872,730 878,743 883,720 892,713 900,715 907,725 915,727 926,718 932,740 941,760 948,735 956,710 963,695 970,690 984,686 995,700
    1005,708 1015,725 1020,738 1028,730 1036,722 1044,715 1050,700 1056,688 1062,695 1070,715 1078,725 1084,708 1092,718 1100,726 1108,722 1117,718
    1127,735 1137,728 1148,730 1155,722 1165,740 1175,730 1185,742 1193,745 1200,728 1210,705 1215,705 1222,722 1230,745 1240,730 1250,718 1257,700
    1263,688 1270,688 1275,705 1282,740 1288,752 1298,750 1305,732 1310,705 1317,690 1326,686 1342,688 1348,712 1355,715 1362,692 1368,689 1380,695
    1387,690 1392,720 1398,745 1403,757 1412,747 1420,753 1427,730 1437,722 1442,722 1448,738 1455,752 1462,755 1475,748 1485,748 1493,730 1500,705
    1508,698 1515,702 1522,735 1528,757 1540,745 1548,720 1554,692 1558,692 1565,715 1575,735 1583,738 1590,705 1597,687 1605,693 1612,690 1620,687
    1632,694 1642,712 1652,720 1660,708 1666,702 1671,715 1674,733`);
    const heavy = parse(`28,718 37,720 45,731 53,729 65,728 72,735 80,750 90,745 100,748 112,758 125,755 140,751 155,747 163,747 172,758 185,752 203,755
    212,745 220,737 232,734 240,743 247,749 260,743 275,738 288,742 300,734 310,737 320,750 332,743 344,737 358,740 370,737 380,730 393,731 403,742
    412,756 422,755 432,757 440,745 450,730 462,708 475,716 490,717 500,732 510,725 522,720 535,726 545,718 557,709 565,718 577,727 590,718 602,697
    612,692 622,700 635,702 645,692 653,698 665,690 680,687 700,686 715,695 728,693 745,693 772,694 785,686 800,690 820,692 830,700 838,717 850,706
    865,706 877,723 890,718 900,722 915,730 925,725 935,740 943,752 957,740 970,735 984,714 1000,716 1013,717 1028,730 1045,725 1055,722 1070,723
    1085,724 1100,718 1125,709 1137,716 1155,715 1175,716 1190,731 1200,728 1215,713 1230,742 1243,741 1252,738 1262,714 1270,716 1280,732 1292,748
    1300,748 1312,730 1325,718 1338,711 1350,716 1362,704 1375,690 1385,690 1395,712 1408,722 1420,735 1437,733 1445,750 1457,760 1470,757 1487,758
    1500,748 1510,745 1520,752 1528,760 1540,750 1555,745 1578,748 1590,733 1605,725 1620,722 1645,720 1660,716 1672,718`);
    let out = rect(28, 684, 1646, 16, '#d9f4d6') + rect(28, 747, 1646, 16, '#fddad9') + grid(677, 767, [708, 732]);
    [684.5, 700.5, 747.5, 763.5].forEach(y => out += line(28, y, LAST, y, '#000'));
    out += line(28, 723, LAST, 723, '#0000a0', 2, 'stroke-dasharray="6 5"');

    // lagged copy and the shade between both
    const lag = heavy.map(([x, y]) => [Math.min(x + 6, LAST), y]);
    out += `<polygon points="${heavy.concat(lag.slice().reverse()).join(' ')}" fill="rgba(150,110,220,.35)"/>`;
    for (let x = 28; x < LAST; x += 4) {
        const y = valueAt(heavy, x);
        if (y < 699) out += rect(x, y, 4, 700 - y, 'rgba(70,160,70,.6)');
        if (y > 749) out += rect(x, 748, 4, y - 748, 'rgba(150,70,50,.5)');
    }
    out += poly(lag, '#222', 4, 'stroke-dasharray="9 7"');
    out += sloped(heavy, d => d > 0 ? '#f00' : '#000090', 4);
    out += poly(quick.map(([x, y]) => [x + 2, y]), '#486048', 1, 'stroke-dasharray="4 4"');
    out += sloped(quick, d => d > 0 ? '#dc2020' : '#000', 2);
    for (let i = 1; i < quick.length - 1; i++) {
        const [x, y] = quick[i];
        const before = y - quick[i - 1][1];
        const after = quick[i + 1][1] - y;
        if (before < 0 && after >= 0) out += down(x + 4, y + 3, '#b80000');
        if (before > 0 && after <= 0) out += up(x + 2, y - 2, '#0000b8');
    }
    mount('trains', 677, 90, out, [
        [684, '100', 'tag'], [700, '80', 'tag'], [713, '57,190', 'tag'], [719, '54,450', 'tag', '#d22'], [726, '45,642', 'tag'],
        [747, '20', 'tag'], [761, '0', 'tag'], [734, '36,473', 'tag', '#d22']
    ]);
}

/* ---- willy ---- */
function drawWilly() {
    const willy = parse(`28,825 33,816 38,818 41,834 45,833 50,817 56,818 61,812 66,822 73,840 80,836 88,819 93,840 100,833 110,843 118,838 130,834
    145,832 155,826 160,832 167,844 175,834 185,831 195,836 205,833 212,816 222,811 230,809 238,837 243,827 255,817 265,810 270,807 277,813 285,818
    292,809 300,808 304,812 312,827 322,818 333,808 338,802 346,806 352,823 362,813 368,806 372,812 376,794 382,806 390,808 398,808 404,843 412,833
    420,838 426,843 433,832 441,823 448,807 457,793 467,795 470,804 480,800 490,802 497,821 505,808 513,812 522,800 527,812 534,805 542,799 546,787
    552,790 558,786 562,812 570,806 578,804 588,804 593,785 602,778 608,779 614,791 622,792 633,796 637,790 644,779 652,782 656,793 661,777 675,778
    690,777 700,776 710,788 722,781 735,786 750,783 760,786 772,789 778,777 790,778 802,777 810,786 820,790 827,812 832,844 838,815 843,808 848,812
    855,806 868,812 873,840 883,815 895,820 905,831 915,827 922,825 930,840 937,845 947,830 960,822 968,818 975,800 983,786 990,790 1000,788
    1013,788 1023,800 1037,798 1055,785 1065,793 1076,783 1087,792 1097,785 1103,792 1113,792 1123,800 1133,796 1140,815 1146,807 1150,812 1158,823
    1168,816 1182,840 1193,832 1200,834 1205,803 1215,815 1224,843 1233,820 1245,826 1255,805 1261,797 1272,804 1280,833 1290,824 1298,837 1305,817
    1315,810 1325,797 1335,788 1346,800 1355,782 1370,779 1388,779 1395,812 1402,805 1414,828 1425,816 1440,817 1450,843 1455,838 1460,843 1470,837
    1478,844 1485,838 1492,841 1500,830 1512,830 1520,843 1530,843 1545,830 1550,822 1555,824 1570,825 1580,823 1590,798 1600,782 1610,776 1625,779
    1635,777 1645,779 1665,778 1672,788`);
    const stripes = {
        '#ffa5a5': '37,44 52,55 63,75 79,82 90,93 101,113 117,120 124,127 132,135 151,154 159,170 181,184 189,197 201,204 223,227 235,238 307,310 403,407 410,418 422,426 494,497 829,832 848,856 883,887 890,906 910,913 924,936 1127,1132 1143,1146 1150,1153 1169,1184 1187,1190 1210,1214 1217,1224 1234,1241 1245,1248 1283,1290 1294,1302 1424,1432 1441,1451 1454,1458 1462,1465 1468,1471 1475,1482 1486,1490 1494,1498 1501,1505 1508,1512 1515,1519 1522,1526 1530,1534 1553,1561 1564,1567 1571,1575',
        '#c1c1fb': '269,273 277,280 284,288 295,304 339,342 345,349 352,355 362,365 375,379 390,394 448,460 463,467 471,475 486,490 505,509 516,525 536,546 551,559 574,577 582,585 589,608 623,627 635,646 650,653 658,662 665,669 672,674 677,681 684,687 690,694 697,700 715,723 730,737 742,745 750,753 757,761 764,768 776,780 783,787 791,796 799,802 810,814 859,863 974,977 993,1006 1009,1013 1024,1030 1033,1036 1040,1060 1064,1078 1082,1090 1094,1099 1103,1108 1112,1117 1121,1125 1257,1264 1317,1325 1329,1336 1347,1367 1374,1378 1382,1386 1589,1599 1606,1610 1637,1641 1648,1660 1664,1668',
        '#63b763': '227,231 265,269 280,284 292,295 334,338 365,368 372,375 444,447 502,505 512,516 532,535 566,569 842,845 856,859 970,974 1206,1209 1253,1256 1314,1317 1401,1404 1585,1588',
        '#bd5d5d': '231,235 273,277 281,285 304,307 349,352 368,372 399,403 490,493 509,512 525,528 562,566 825,829 845,848 867,870 1133,1137 1153,1156 1203,1206 1276,1279 1397,1401 1413,1416'
    };
    let out = '';
    Object.keys(stripes).forEach(color => parse(stripes[color]).forEach(([a, b]) => out += rect(a, 768, b - a, 81, color)));
    out += grid(768, 849, [788, 803, 817, 831]);
    out += line(28, 774.5, LAST, 774.5, '#000', 1, 'stroke-dasharray="5 4"') + line(28, 845.5, LAST, 845.5, '#000', 1, 'stroke-dasharray="5 4"');
    for (let x = 28; x < LAST; x += 3) {
        const y = valueAt(willy, x);
        if (y < 792) out += rect(x, y, 3, 792 - y, 'rgba(50,160,50,.5)');
        if (y > 828) out += rect(x, 828, 3, y - 828, 'rgba(140,40,50,.5)');
    }
    out += line(28, 792.5, LAST, 792.5, '#000090', 2);
    out += line(28, 828.5, LAST, 828.5, '#c00000', 2);
    out += line(28, 810.5, LAST, 810.5, '#000090', 2, 'stroke-dasharray="5 5"');
    const dense = [];
    for (let x = 28; x <= 1672; x += 2) dense.push([x, valueAt(willy, x)]);
    out += sloped(dense, (d, y) => y < 791 ? '#00c800' : y > 829 ? '#900000' : d < 0 ? '#0000c8' : '#ff9a0a', 4);
    for (let i = 1; i < dense.length; i++) {
        const before = dense[i - 1][1];
        const now = dense[i][1];
        if (before > 810 && now <= 810) out += up(dense[i][0], 810, '#0000b0', 6);
        if (before < 810 && now >= 810) out += down(dense[i][0], 810, '#b00000', 6);
    }
    mount('willy', 768, 81, out, [
        [774, '0', 'tag'], [788, '-17,910', 'tag', '#0b0'], [797, '-25', 'tag', '#000090'], [817, '-60'], [811, '-50', 'tag', '#000090'],
        [828, '-75', 'tag', '#c00'], [842, '-100', 'tag']
    ]);
}

/* ---- awesome ---- */
function drawAwesome() {
    const a = parse(`28,887 33,888 40,892 50,894 58,890 68,889 80,900 90,894 105,894 120,893 140,890 155,885 163,886 168,900 173,908 180,905 190,902
    200,899 208,893 215,882 223,878 233,879 238,886 246,892 255,888 270,883 282,882 295,886 307,887 315,893 325,892 337,888 350,887 362,888 370,884
    381,882 390,886 400,885 405,897 412,903 425,903 438,900 445,890 452,878 460,874 470,876 480,880 490,883 500,892 512,890 522,885 533,890 545,884
    558,880 570,889 580,887 590,883 603,878 612,875 625,879 636,882 644,885 652,884 660,878 668,868 675,862 690,860 700,860 710,873 720,882 735,885
    760,887 770,889 782,880 795,878 812,880 822,884 830,898 838,912 843,900 850,890 862,888 870,893 878,900 890,890 905,895 922,889 933,900 945,907
    957,893 970,885 976,875 983,870 992,873 1005,877 1015,883 1028,893 1040,893 1055,885 1070,884 1090,885 1110,886 1130,890 1145,895 1157,896
    1170,894 1182,898 1195,900 1205,890 1213,883 1222,887 1232,898 1240,900 1252,897 1258,885 1263,878 1270,880 1280,890 1290,898 1300,899 1312,892
    1320,880 1332,873 1343,876 1355,878 1365,870 1385,868 1392,880 1400,898 1410,898 1418,910 1427,905 1440,898 1450,910 1460,916 1467,920 1475,915
    1485,908 1495,895 1505,885 1513,884 1522,896 1530,903 1540,893 1553,882 1565,884 1580,886 1590,876 1600,866 1610,869 1620,865 1630,870 1642,874
    1653,880 1664,879 1673,886`);
    const b = parse(`28,889 40,890 52,892 65,890 80,897 95,893 110,896 125,897 140,894 160,890 172,900 182,907 195,904 208,901 220,892 235,888 250,892
    265,890 285,884 305,884 320,892 333,892 355,887 375,887 398,887 410,895 422,900 435,901 448,893 460,885 475,882 490,884 505,890 520,887 530,884
    545,888 560,884 575,889 590,888 605,883 620,878 635,881 645,882 655,879 668,872 680,864 702,856 715,862 735,872 755,877 772,882 790,878 810,877
    825,881 835,890 845,897 857,896 865,893 875,898 887,897 900,893 915,899 935,894 950,903 965,898 978,887 990,877 1003,877 1015,880 1035,888
    1055,884 1080,883 1100,885 1120,886 1140,888 1155,892 1170,892 1190,899 1205,896 1220,890 1235,899 1252,899 1265,888 1278,886 1290,894 1300,901
    1312,897 1330,886 1345,879 1365,873 1390,865 1400,872 1412,885 1422,895 1432,901 1442,900 1455,912 1470,923 1480,926 1495,922 1508,912 1515,900
    1525,903 1535,909 1547,898 1560,890 1575,886 1585,888 1597,876 1612,870 1632,865 1645,866 1660,869 1673,873`);
    let out = grid(850, 929, [858, 915]);
    xs.forEach(x => {
        const y = valueAt(a, x);
        const s = valueAt(b, x);
        const falling = y > valueAt(a, x - 3);
        const cx = Math.round(x) + 0.5;
        out += line(cx, y, cx, s, s > y ? '#b9f5b9' : '#ffc4c4');
        const color = y < 886 ? (falling ? '#f0f' : '#00f') : (falling ? '#e01030' : '#089090');
        out += line(cx, 886, cx, y, color, 2);
    });
    out += line(28, 886.5, LAST, 886.5, '#00f', 2);
    out += sloped(a, d => d > 0 ? '#b000b0' : '#000030', 4, 'stroke-linejoin="round"');
    out += sloped(b, d => d > 0 ? '#ff9a0a' : '#60ff60', 4, 'stroke-linejoin="round"');
    for (let i = 1; i < b.length - 1; i++) {
        const [x, y] = b[i];
        if (x > 690 && x < 720) continue;
        if (y < b[i - 1][1] && b[i + 1][1] > y) out += down(x, y, '#ff0');
        if (y > b[i - 1][1] && b[i + 1][1] < y) out += up(x, y, '#0ff');
    }
    mount('awesome', 850, 79, out, [
        [858, '500'], [866, '287,55', 'tag', '#e22'], [874, '237,55', 'tag', '#ff9000'], [887, '0,1619', 'tag', '#f0f'],
        [893, '0', 'tag', '#f0f'], [915, '-500']
    ]);
}

/* ---- strength ---- */
function drawStrength() {
    const bars = parse(`30,977 35,980 40,974 50,968 58,972 65,978 75,969 85,968 96,962 105,967 115,971 120,966 130,973 145,978 157,982 165,968 172,960
    182,963 190,961 200,968 215,970 230,978 240,967 255,974 265,973 278,977 290,969 298,973 303,979 308,963 315,969 325,977 338,968 348,975 355,971
    370,981 383,973 398,979 408,975 418,977 425,970 435,966 442,965 455,959 468,965 477,966 490,976 500,971 515,978 530,971 547,968 562,975 570,962
    582,966 593,966 605,978 617,972 630,979 640,976 655,975 665,956 675,960 687,957 700,966 718,972 728,977 740,973 755,974 770,979 785,974 800,973
    812,968 822,970 829,960 834,945 842,935 855,944 865,952 875,944 883,943 895,954 912,960 925,953 935,957 950,945 960,957 975,961 990,968 1005,973
    1015,976 1022,962 1035,960 1045,965 1052,975 1065,970 1077,973 1095,970 1110,976 1130,974 1140,968 1152,960 1160,956 1175,965 1187,963 1200,974
    1207,962 1222,965 1230,955 1245,953 1257,945 1270,957 1280,949 1290,952 1305,937 1315,948 1335,960 1345,970 1360,969 1370,974 1385,970 1395,972
    1402,956 1415,952 1422,940 1435,958 1445,948 1460,945 1472,940 1490,949 1500,955 1510,945 1522,940 1540,935 1555,950 1570,957 1585,960 1598,964
    1608,962 1622,974 1640,983 1655,990 1663,993 1673,991`);
    const zones = {
        '#fffa87': '28,1675',
        '#b0eefe': '93,105 120,125 170,208 433,479 570,582 593,597 666,699 829,985 1024,1050 1141,1188 1210,1222 1225,1340 1396,1598',
        '#3dfa3d': '28,33 37,52 67,79 83,90 113,118 159,166 231,239 262,266 277,292 327,338 349,357 373,386 399,410 422,429 493,506 517,532 540,551 562,566 612,624 635,646 654,662 730,742 753,757 776,784 791,810 1012,1020 1058,1066 1077,1080 1085,1091 1106,1119 1127,1137 1203,1207 1348,1355 1367,1372 1382,1386 1389,1393 1652,1656 1668,1675',
        '#6b6bc4': '93,98 170,178 185,193 212,216 310,315 433,441 445,456 467,475 570,573 680,692 829,845 867,883 902,906 917,932 940,951 970,974 1024,1030 1035,1042 1141,1161 1176,1188 1210,1214 1225,1238 1242,1259 1276,1283 1290,1306 1396,1406 1413,1423 1439,1462 1466,1473 1488,1500 1511,1522 1530,1542 1557,1565 1584,1590 1610,1614',
        '#5a0000': '90,93 117,120 166,170 208,212 239,243 307,310 429,433 566,570 589,592 662,666 826,829 1021,1024 1137,1141 1207,1210 1222,1225 1392,1396 1607,1610'
    };
    let out = '';
    Object.keys(zones).forEach(color => parse(zones[color]).forEach(([a, b]) => out += rect(a, 930, b - a, 65, color)));
    out += grid(930, 995, [936, 956, 976]);
    xs.forEach(x => {
        const y = valueAt(bars, x);
        const rising = y < valueAt(bars, x - 3);
        out += rect(Math.round(x), y, 2, 995 - y, rising ? 'rgba(10,10,220,.7)' : 'rgba(255,50,50,.65)');
    });
    out += line(28, 966.5, LAST, 966.5, '#000');
    mount('strength', 930, 65, out, [
        [936, '0,8'], [956, '0,6'], [976, '0,4'], [966, '0,5000', 'tag'], [989, '0,2531', 'tag', '#00d']
    ]);
}

/* ---- tools ---- */
const plus = (x, y) => `<path d="M${x - 2} ${y}h4M${x} ${y - 2}v4" stroke="#11e"/>`;
const flat = (color, w = 2) => `<path d="M1 9h18" stroke="${color}" stroke-width="${w}"/>`;
const oval = color => `<ellipse cx="10" cy="9" rx="7" ry="5" fill="${color}" fill-opacity=".25" stroke="${color}" stroke-width="1.5"/>` + plus(3, 15) + plus(17, 4);
const slash = (color, w) => `<path d="M1 17L19 1" stroke="${color}" stroke-width="${w}"/>`;
const bell = (x, y) => `<path d="M${x - 6} ${y + 5}q3-2 3-6q0-4 3-4t3 4q0 4 3 6z" fill="#ffe020" stroke="#8a7500"/><circle cx="${x}" cy="${y + 6}" r="1.5" fill="#8a7500"/>`;
const tools = [
    ['Cursor', '<path d="M7 2v11l3-2 2 5 2-1-2-5h3z" fill="#e4e9ec" stroke="#566"/>'],
    ['Lupa', '<circle cx="8" cy="7" r="4" fill="#c8dce6" stroke="#333"/><path d="M11 10l5 6" stroke="#222" stroke-width="2"/>'],
    ['Zoom', '<path d="M8 5H1v10h10" fill="none" stroke="#15c" stroke-dasharray="2 1"/><circle cx="11" cy="6" r="4" fill="#c8dce6" stroke="#333"/><path d="M14 9l5 6" stroke="#222" stroke-width="2"/>'],
    ['Alarma', bell(7, 9) + '<path d="M1 4h13" stroke="#111"/><path d="M11 1l6 5M17 1l-6 5" stroke="#11e"/><path d="M13 5v9l2-2 2 4 1-1-1-4h2z" fill="#fff" stroke="#666"/>'],
    ['Alertas', bell(10, 9) + '<path d="M3 2q-3 3 0 6M17 2q3 3 0 6" fill="none" stroke="#777"/>'],
    ['Fibonacci', '<path d="M3 2v7h4M3 2l4 10" fill="none" stroke="#111"/><path d="M6 7h12" stroke="#f84" stroke-dasharray="2 1"/><path d="M6 11h8M15 15V9h4M15 12h3" fill="none" stroke="#11e" stroke-width="1.5"/>' + plus(3, 12)],
    ['Niveles', '<path d="M3 7h15" stroke="#f84" stroke-dasharray="2 1"/><path d="M3 10h10" stroke="#11e" stroke-dasharray="2 1"/><path d="M15 15V9h4M15 12h3" fill="none" stroke="#11e" stroke-width="1.5"/>'],
    ['Zona azul', '<path d="M4 6h12v8H4z" fill="none" stroke="#6b98f5" stroke-width="1.5"/>' + plus(4, 14) + plus(16, 5)],
    ['Zona roja', '<path d="M4 5h12v9H4z" fill="#b79aa8" stroke="#e22" stroke-width="1.5"/>' + plus(4, 15) + plus(16, 4)],
    ['Flecha', '<path d="M5 14L15 5" stroke="#111" stroke-width="2"/><path d="M17 3l-7 2 5 5z"/><circle cx="4" cy="14" r="2" fill="none" stroke="#111"/>'],
    ['Texto', '<path d="M4 2h12v11l-3 3H4z" fill="#b5cfe8" stroke="#6b98f5"/><path d="M7 6h6M10 6v7" stroke="#222" stroke-width="2"/>'],
    ['Nota', '<path d="M10 16l-2-1A7 6 0 1 1 12 15z" fill="#b5cfe8" stroke="#6b98f5"/><path d="M7 5h6M10 5v7" stroke="#183" stroke-width="2"/>'],
    ['Segmento', '<path d="M5 13L15 5" stroke="#222"/><circle cx="4" cy="14" r="2" fill="none" stroke="#222"/><circle cx="16" cy="4" r="2" fill="none" stroke="#222"/>'],
    ['Rayo verde', '<path d="M9 9h10" stroke="#3b4" stroke-width="2"/><circle cx="7" cy="9" r="2" fill="none" stroke="#3b4"/>'],
    ['Rayo rojo', '<path d="M9 9h10" stroke="#e22" stroke-width="2"/><circle cx="7" cy="9" r="2" fill="none" stroke="#e22"/>'],
    ['Regla', '<path d="M2 13L14 1l4 4L6 17z" fill="#b9c7d0" stroke="#456"/><path d="M6 10l2 2M9 7l2 2M12 4l2 2" stroke="#456"/>'],
    ['Canal', '<path d="M1 1h18v7H1z" fill="#7ec8a4"/><path d="M1 8h18v8H1z" fill="#c9a0ac"/><path d="M1 13l5-5 4 4 4-7 5-2" fill="none" stroke="#aacbff" stroke-width="1.5"/>'],
    ['Elipse roja', oval('#e22')], ['Elipse marrón', oval('#853')], ['Elipse verde', oval('#184')], ['Elipse lima', oval('#1e3')],
    ['Línea negra', slash('#111', 1)], ['Línea verde', slash('#3b4', 2)], ['Línea roja', slash('#e11', 2)],
    ['Nivel negro', flat('#111', 1)], ['Nivel rosa', flat('#f08080')], ['Nivel lima', flat('#0f1')], ['Nivel verde', flat('#082')],
    ['Nivel rojo', flat('#f00')], ['Nivel azul', flat('#6b98f5')], ['Nivel marino', flat('#00a')],
    ['Vertical', '<path d="M10 1v17" stroke="#111"/>'],
    ['Ángulo', '<path d="M16 2L2 14h16" fill="none" stroke="#d66"/><path d="M9 14q0-3-2-4M12 7v6" fill="none" stroke="#11e" stroke-width="2"/><circle cx="16" cy="8" r="2" fill="none" stroke="#11e"/>'],
    ['Círculo', '<circle cx="10" cy="9" r="7" fill="none" stroke="#e96" stroke-width="1.5"/>' + plus(9, 9) + plus(14, 6)],
    ['Ondas', '<path d="M1 8l5 8 5-14 4 10 4-10" fill="none" stroke="#9bf"/>' + plus(3, 6) + plus(5, 12) + plus(10, 4) + plus(12, 12) + plus(17, 2) + plus(17, 9)],
    ['ABC', '<path d="M2 13l7-9 6 11" fill="none" stroke="#9bf"/>' + plus(3, 12) + plus(9, 5) + plus(15, 14) + plus(16, 5)],
    ['Correcto', '<path d="M2 10l3-2 3 4 8-10 3 1L9 17z" fill="#2ec43c" stroke="#1b8a28"/>'],
    ['Me gusta', '<path d="M2 9h4v8H2zM7 9l4-7q3 0 1 6h6l-2 9H7z" fill="#35c646" stroke="#187a26"/>'],
    ['Cruz', '<path d="M3 6l4-4 3 3 3-3 4 4-3 3 3 4-4 4-3-4-3 4-4-4 3-4z" fill="#f01818" stroke="#a00"/>'],
    ['Aviso', '<path d="M10 2l8 14H2z" fill="#ffb52e" stroke="#b87400"/><path d="M10 7v5M10 13v2" stroke="#333" stroke-width="2"/>'],
    ['Subida', '<path d="M10 3l5 6h-3v6H8V9H5z" fill="#1da82c" stroke="#117020"/>'],
    ['Bajada', '<path d="M8 2h4v7h3l-5 6-5-6h3z" fill="#e22"/>']
];
const extraTools = [
    ['Plantilla', '<path d="M6 2h10v12H6z" fill="#eee" stroke="#777"/><path d="M8 11l2-3 3 2" fill="none" stroke="#b33"/><circle cx="5" cy="4" r="4" fill="#1a7d1a"/><path d="M5 2v4" stroke="#fff"/><path d="M11 10l6 6" stroke="#fff" stroke-width="3"/><path d="M10 9l7 7M14 17h5l-2 2z" stroke="#222"/>'],
    ['Más', '<path d="M3 9h2M8 9h2M13 9h2" stroke="#222" stroke-width="2"/><path d="M12 13h6l-3 3z"/>']
];

function fillTools(id, list) {
    document.getElementById(id).innerHTML = list.map(([name, art], i) =>
        `<button aria-label="${name}"${id === 'tools' && i === 0 ? ' class="on"' : ''}><svg width="20" height="18" viewBox="0 0 20 18">${art}</svg></button>`).join('');
}

drawPrice();
drawTrains();
drawWilly();
drawAwesome();
drawStrength();
fillTools('tools', tools);
fillTools('extraTools', extraTools);
document.getElementById('dates').innerHTML = dateLabels.map(([x, text]) =>
    `<span style="left:${(x - LEFT) / (RIGHT - LEFT) * 100}%">${text}</span>`).join('');
```
